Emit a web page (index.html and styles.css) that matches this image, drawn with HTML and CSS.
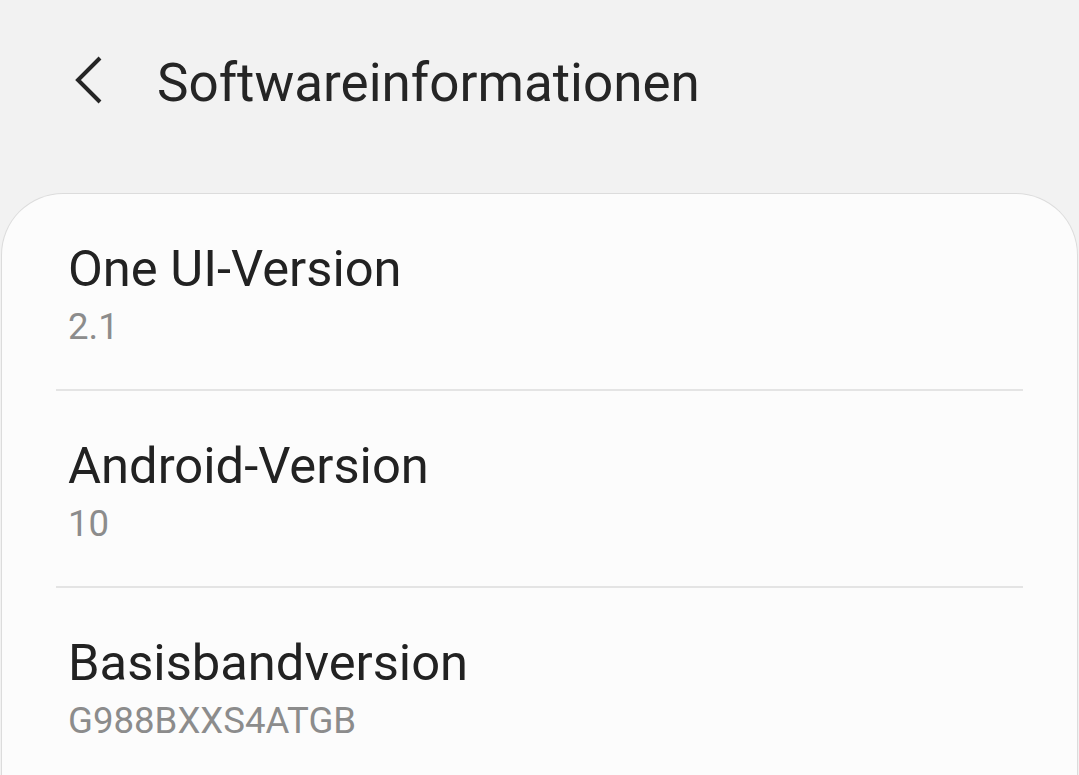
FILE: index.html
```html
<!DOCTYPE html>
<html lang="de">
<head>
<meta charset="utf-8">
<title>Softwareinformationen</title>
<link rel="stylesheet" href="styles.css">
</head>
<body>
<header class="header">
  <span class="back" aria-label="Zurück">
    <svg width="30" height="48" viewBox="0 0 30 48"><path d="M27 2 L5 24 L27 46" fill="none" stroke="#252525" stroke-width="4" stroke-linecap="butt" stroke-linejoin="miter"/></svg>
  </span>
  <h1 class="title">Softwareinformationen</h1>
</header>
<main class="card">
  <div class="item">
    <div class="item-title">One UI-Version</div>
    <div class="item-sub">2.1</div>
  </div>
  <div class="item">
    <div class="item-title">Android-Version</div>
    <div class="item-sub">10</div>
  </div>
  <div class="item">
    <div class="item-title">Basisbandversion</div>
    <div class="item-sub">G988BXXS4ATGB</div>
  </div>
</main>
</body>
</html>
```
FILE: styles.css
```css
html, body {
  margin: 0;
  padding: 0;
  background: #f2f2f2;
  font-family: Roboto, "Noto Sans", sans-serif;
}
body {
  height: 100vh;
  display: flex;
  flex-direction: column;
  overflow: hidden;
}
.header {
  box-sizing: border-box;
  height: 161px;
  flex: none;
  display: flex;
  align-items: flex-start;
  padding: 53px 0 0 73px;
}
.back {
  display: flex;
  width: 30px;
  height: 48px;
  margin-top: 3px;
  margin-right: 54px;
}
.title {
  margin: 0;
  font-size: 53px;
  font-weight: 400;
  color: #252525;
  line-height: 60px;
}
.card {
  flex: 1;
  min-height: 0;
  overflow: hidden;
  margin: 32px 1px 0;
  background: #fcfcfc;
  border: 1px solid #dcdcdc;
  border-bottom: none;
  border-radius: 62px 62px 0 0;
  padding: 0 54px;
}
.item {
  padding: 45px 12px 38px;
  border-bottom: 2px solid #e4e4e4;
}
.item-title {
  font-size: 50.7px;
  line-height: 60px;
  color: #222222;
}
.item-sub {
  margin-top: 4px;
  font-size: 36.6px;
  line-height: 48px;
  color: #8c8c8c;
}
```
